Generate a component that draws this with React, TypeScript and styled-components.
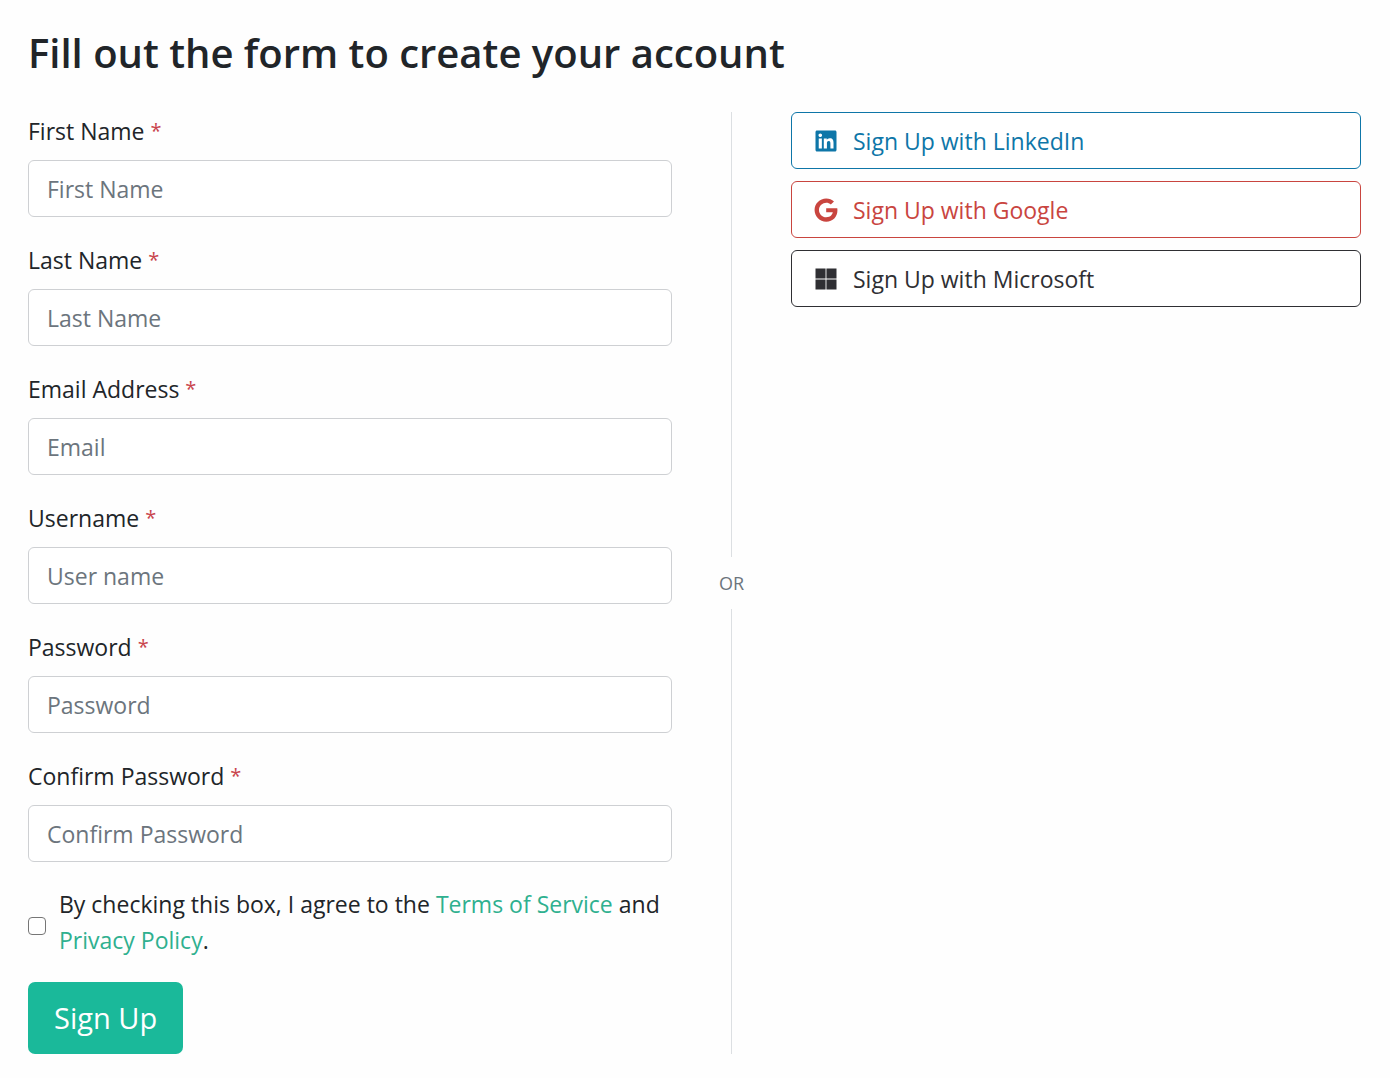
import React from "react";
import styled, { createGlobalStyle } from "styled-components";
import { FaGoogle, FaLinkedin, FaMicrosoft } from "react-icons/fa";

const GlobalStyle = createGlobalStyle`
  *, *::before, *::after { box-sizing: border-box; }
  body {
    margin: 0;
    background: #fefefe;
    color: #212529;
    font-family: "Segoe UI", "Open Sans", "Noto Sans", sans-serif;
    font-size: 23px;
    line-height: 36px;
  }
  button, input { font: inherit; }
`;

const Page = styled.main`
  padding: 28px 29px 20px 28px;
`;

const Title = styled.h1`
  margin: 0 0 34px;
  font-size: 40px;
  font-weight: 600;
  line-height: 50px;
`;

const Columns = styled.div`
  display: grid;
  grid-template-columns: 644fr 119px 570fr;
`;

const Form = styled.form`
  display: flex;
  flex-direction: column;
  align-items: stretch;
  gap: 24px;
`;

const Field = styled.div`
  display: flex;
  flex-direction: column;
  gap: 10px;
`;

const FieldLabel = styled.label`
  line-height: 38px;
`;

const Required = styled.span`
  color: #c9454d;
  font-size: 20px;
  line-height: 20px;
  vertical-align: 2px;
`;

const TextInput = styled.input`
  width: 100%;
  height: 57px;
  padding: 0 18px;
  border: 1px solid #ced0d3;
  border-radius: 6px;
  background: #fff;
  color: #212529;

  &::placeholder {
    color: #6c757d;
    opacity: 1;
  }
`;

const Consent = styled.div`
  display: flex;
  align-items: center;
  gap: 13px;
`;

const Checkbox = styled.input`
  appearance: none;
  flex: none;
  width: 18px;
  height: 18px;
  margin: 8px 0 0;
  border: 1px solid #767676;
  border-radius: 4px;
  background: #fff;

  &:checked {
    background: #1ab99a;
  }
`;

const Link = styled.a`
  color: #2fb08f;
  text-decoration: none;
`;

const SubmitButton = styled.button`
  align-self: flex-start;
  height: 72px;
  padding: 0 26px;
  border: 0;
  border-radius: 7px;
  background: #1ab99a;
  color: #fff;
  font-size: 29px;
  cursor: pointer;
`;

const Divider = styled.div`
  display: flex;
  flex-direction: column;
  align-items: center;
  color: #6c757d;
  font-size: 18px;
  line-height: 52px;

  &::before, &::after {
    content: "";
    flex: 1;
    width: 1px;
    background: #dcdfe2;
  }
`;

const Providers = styled.div`
  display: flex;
  flex-direction: column;
  gap: 12px;
`;

const ProviderButton = styled.button<{ $color: string }>`
  display: flex;
  align-items: center;
  gap: 12px;
  height: 57px;
  padding: 0 19px;
  border: 1px solid ${({ $color }) => $color};
  border-radius: 6px;
  background: #fff;
  color: ${({ $color }) => $color};
  cursor: pointer;

  svg {
    flex: none;
    width: 30px;
    height: 24px;
  }
`;

const fields = [
  { id: "first-name", label: "First Name", placeholder: "First Name", type: "text" },
  { id: "last-name", label: "Last Name", placeholder: "Last Name", type: "text" },
  { id: "email", label: "Email Address", placeholder: "Email", type: "email" },
  { id: "username", label: "Username", placeholder: "User name", type: "text" },
  { id: "password", label: "Password", placeholder: "Password", type: "password" },
  { id: "confirm-password", label: "Confirm Password", placeholder: "Confirm Password", type: "password" },
];

const providers = [
  { name: "LinkedIn", color: "#0e76a8", Icon: FaLinkedin },
  { name: "Google", color: "#c9453f", Icon: FaGoogle },
  { name: "Microsoft", color: "#2f2f33", Icon: FaMicrosoft },
];

export default function App() {
  return (
    <Page>
      <GlobalStyle />
      <Title>Fill out the form to create your account</Title>
      <Columns>
        <Form onSubmit={(event) => event.preventDefault()}>
          {fields.map(({ id, label, placeholder, type }) => (
            <Field key={id}>
              <FieldLabel htmlFor={id}>
                {label} <Required>*</Required>
              </FieldLabel>
              <TextInput id={id} name={id} type={type} placeholder={placeholder} required />
            </Field>
          ))}
          <Consent>
            <Checkbox id="agree" type="checkbox" />
            <label htmlFor="agree">
              By checking this box, I agree to the <Link href="#terms">Terms of Service</Link> and{" "}
              <Link href="#privacy">Privacy Policy</Link>.
            </label>
          </Consent>
          <SubmitButton type="submit">Sign Up</SubmitButton>
        </Form>
        <Divider>OR</Divider>
        <Providers>
          {providers.map(({ name, color, Icon }) => (
            <ProviderButton key={name} type="button" $color={color}>
              <Icon aria-hidden="true" />
              <span>Sign Up with {name}</span>
            </ProviderButton>
          ))}
        </Providers>
      </Columns>
    </Page>
  );
}
